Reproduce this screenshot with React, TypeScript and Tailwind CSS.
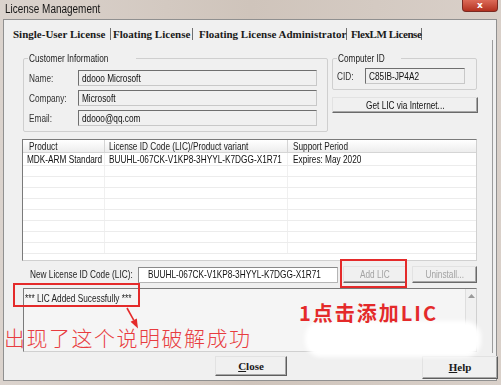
import React from "react";

const ui = { fontFamily: '"Liberation Sans", Arial, sans-serif' };
const tabFont = { fontFamily: '"Liberation Serif", "Noto Sans CJK SC", serif' };
const cjk = { fontFamily: '"Noto Sans CJK SC", "Noto Sans", sans-serif' };

function T({ children, center }: { children: React.ReactNode; center?: boolean }) {
  return (
    <span
      className={`inline-block whitespace-nowrap scale-x-[0.75] ${center ? "origin-center" : "origin-left"}`}
    >
      {children}
    </span>
  );
}

function Field({ text, w }: { text: string; w: string }) {
  return (
    <div
      className={`${w} h-[16px] shrink-0 bg-[#f0f0f0] border border-[#c8c8c8] border-t-[#6f6f6f] border-l-[#6f6f6f] flex items-center pl-[3px] text-[#111] overflow-visible`}
    >
      <T>{text}</T>
    </div>
  );
}

function Btn({
  label,
  w,
  h,
  disabled,
}: {
  label: string;
  w: string;
  h: string;
  disabled?: boolean;
}) {
  return (
    <div
      className={`${w} ${h} shrink-0 bg-[#f0f0f0] border border-[#e2e2e2] border-b-[#6a6a6a] border-r-[#6a6a6a] shadow-[inset_-1px_-1px_0_#a8a8a8] flex items-center justify-center ${
        disabled ? "text-[#a3a3a3]" : "text-[#111]"
      }`}
    >
      <T center>{label}</T>
    </div>
  );
}

const rows = Array.from({ length: 8 });

export default function App() {
  return (
    <div
      className="w-[501px] h-[385px] relative overflow-hidden flex flex-col bg-gradient-to-r from-[#dbd3cd] via-[#cfc4bb] to-[#d9d0c9]"
      style={ui}
    >
      {/* title bar */}
      <div className="h-[19px] shrink-0 flex items-start justify-between">
        <span className="ml-[5px] mt-[2px] text-[12px] leading-[14px] text-[#141414] inline-block origin-left scale-x-[0.83] whitespace-nowrap">
          License Management
        </span>
        <div className="mr-[3px] w-[36px] h-[12px] rounded-b-[4px] bg-gradient-to-b from-[#dc6a58] to-[#b3301f] border border-t-0 border-[#7a2a22] flex items-end justify-center pb-[1px]">
          <span className="text-white text-[9px] leading-[9px] font-bold" style={{ fontFamily: '"DejaVu Sans", sans-serif' }}>
            x
          </span>
        </div>
      </div>

      {/* body */}
      <div className="flex-1 ml-[3px] mr-[4px] mb-[4px] bg-[#f0f0f0] border border-[#909090] flex flex-col">
        {/* tabs */}
        <div className="h-[20px] shrink-0 flex items-end pl-[4px] text-[11px] leading-[12px] font-bold text-[#1a1a1a]" style={tabFont}>
          <div className="w-[103px] h-[12px] shrink-0 pl-[5px] border-r border-[#6f6f6f] whitespace-nowrap">Single-User License</div>
          <div className="w-[82px] h-[12px] shrink-0 pl-[2px] border-r border-[#6f6f6f] whitespace-nowrap">Floating License</div>
          <div className="w-[154px] h-[12px] shrink-0 pl-[6px] border-r border-[#6f6f6f] whitespace-nowrap">Floating License Administrator</div>
          <div className="w-[75px] h-[12px] shrink-0 pl-[4px] border-r border-[#6f6f6f] whitespace-nowrap tracking-[-0.4px]">FlexLM License</div>
        </div>

        {/* panel */}
        <div className="w-[489px] h-[313px] shrink-0 border-r border-[#9c9c9c] flex flex-col text-[11px] leading-[13px] text-[#111]">
          {/* row A */}
          <div className="mt-[12px] flex items-start">
            <fieldset className="ml-[19px] w-[305px] h-[80px] shrink-0 border border-[#cfcfcf] rounded-[2px] flex flex-col">
              <legend className="ml-[4px] px-[1px] text-[11px] leading-[12px] text-[#222]">
                <T>Customer Information</T>
              </legend>
              <div className="mt-[6px] flex flex-col gap-[4px]">
                <div className="flex items-center">
                  <span className="w-[54px] shrink-0 pl-[5px] text-[#333]"><T>Name:</T></span>
                  <Field text="ddooo Microsoft" w="w-[239px]" />
                </div>
                <div className="flex items-center">
                  <span className="w-[54px] shrink-0 pl-[5px] text-[#333]"><T>Company:</T></span>
                  <Field text="Microsoft" w="w-[239px]" />
                </div>
                <div className="flex items-center">
                  <span className="w-[54px] shrink-0 pl-[5px] text-[#333]"><T>Email:</T></span>
                  <Field text="ddooo@qq.com" w="w-[239px]" />
                </div>
              </div>
            </fieldset>
            <div className="ml-[4px] flex flex-col">
              <fieldset className="w-[145px] h-[38px] border border-[#cfcfcf] rounded-[2px] flex flex-col">
                <legend className="ml-[4px] px-[1px] text-[11px] leading-[12px] text-[#222]">
                  <T>Computer ID</T>
                </legend>
                <div className="mt-[4px] flex items-center">
                  <span className="w-[32px] shrink-0 pl-[4px] text-[#333]"><T>CID:</T></span>
                  <Field text="C85IB-JP4A2" w="w-[100px]" />
                </div>
              </fieldset>
              <div className="mt-[7px]">
                <Btn label="Get LIC via Internet..." w="w-[146px]" h="h-[16px]" />
              </div>
            </div>
          </div>

          {/* table */}
          <div className="mt-[7px] ml-[18px] w-[455px] h-[122px] bg-white border border-[#d0d0d0] border-t-[#7a7a7a] border-l-[#7a7a7a] flex flex-col overflow-hidden">
            <div className="h-[13px] shrink-0 flex bg-gradient-to-b from-[#ffffff] to-[#ededed] border-b border-[#d5d5d5] text-[#222]">
              <div className="w-[82px] shrink-0 pl-[6px] border-r border-[#d5d5d5] flex items-center"><T>Product</T></div>
              <div className="w-[183px] shrink-0 pl-[4px] border-r border-[#d5d5d5] flex items-center"><T>License ID Code (LIC)/Product variant</T></div>
              <div className="flex-1 pl-[5px] flex items-center"><T>Support Period</T></div>
            </div>
            <div className="h-[13px] shrink-0 flex border-b border-[#ececec]">
              <div className="w-[82px] shrink-0 pl-[4px] border-r border-[#f0f0f0] flex items-center"><T>MDK-ARM Standard</T></div>
              <div className="w-[183px] shrink-0 pl-[4px] border-r border-[#f0f0f0] flex items-center"><T>BUUHL-067CK-V1KP8-3HYYL-K7DGG-X1R71</T></div>
              <div className="flex-1 pl-[5px] flex items-center"><T>Expires: May 2020</T></div>
            </div>
            {rows.map((_, i) => (
              <div key={i} className="h-[11px] shrink-0 flex border-b border-[#ececec]">
                <div className="w-[82px] shrink-0 border-r border-[#f0f0f0]" />
                <div className="w-[183px] shrink-0 border-r border-[#f0f0f0]" />
                <div className="flex-1" />
              </div>
            ))}
          </div>

          {/* LIC row */}
          <div className="mt-[5px] h-[17px] flex items-center">
            <span className="ml-[26px] w-[108px] shrink-0 text-[#222]"><T>New License ID Code (LIC):</T></span>
            <div className="w-[200px] h-[16px] shrink-0 bg-white border border-[#b5b5b5] border-t-[#8a8a8a] border-l-[#8a8a8a] flex items-center pl-[9px]">
              <T>BUUHL-067CK-V1KP8-3HYYL-K7DGG-X1R71</T>
            </div>
            <div className="ml-[5px]">
              <Btn label="Add LIC" w="w-[64px]" h="h-[17px]" disabled />
            </div>
            <div className="ml-[5px]">
              <Btn label="Uninstall..." w="w-[65px]" h="h-[17px]" disabled />
            </div>
          </div>

          {/* status */}
          <div className="mt-[5px] ml-[19px] w-[454px] h-[64px] bg-[#f5f5f5] border border-[#d0d0d0] border-t-[#7a7a7a] border-l-[#7a7a7a] flex">
            <div className="flex-1 pl-[1px] pt-[3px] text-[#222]"><T>*** LIC Added Sucessfully ***</T></div>
            <div className="w-[11px] border-l border-[#dedede] bg-[#f0f0f0] flex justify-center pt-[5px]">
              <svg width="7" height="4" viewBox="0 0 7 4">
                <path d="M0 4 L3.5 0 L7 4 Z" fill="#9a9a9a" />
              </svg>
            </div>
          </div>
        </div>

        {/* bottom buttons */}
        <div className="mt-[3px] flex items-start" style={tabFont}>
          <div className="ml-[211px] w-[72px] h-[20px] shrink-0 bg-[#f0f0f0] border border-[#e2e2e2] border-b-[#5e5e5e] border-r-[#5e5e5e] shadow-[inset_-1px_-1px_0_#a8a8a8] flex items-center justify-center text-[11px] leading-[12px] font-bold text-[#1a1a1a]">
            <span><span className="underline">C</span>lose</span>
          </div>
          <div className="ml-[135px] w-[76px] h-[23px] shrink-0 bg-[#f0f0f0] border border-[#e2e2e2] border-b-[#5e5e5e] border-r-[#5e5e5e] shadow-[inset_-1px_-1px_0_#a8a8a8] flex items-end justify-center pb-[5px] text-[11px] leading-[12px] font-bold text-[#1a1a1a]">
            <span><span className="underline">H</span>elp</span>
          </div>
        </div>
      </div>

      {/* annotations overlay */}
      <div className="absolute left-[13px] top-[283px] w-[127px] h-[24px] border-2 border-[#e42a2a]" />
      <div className="absolute left-[340px] top-[259px] w-[67px] h-[29px] border-2 border-[#e42a2a]" />
      <svg className="absolute left-[120px] top-[305px]" width="25" height="28" viewBox="0 0 25 28">
        <line x1="7" y1="3" x2="13.7" y2="15.1" stroke="#e42a2a" strokeWidth="1.6" />
        <polygon points="16.8,13.4 10.6,16.8 18,23.5" fill="#e42a2a" />
      </svg>
      <div className="absolute left-[305px] top-[321px] w-[176px] h-[36px] rounded-[16px] bg-white blur-[2px]" />
      <div
        className="absolute left-[4px] top-[327px] text-[21px] leading-[21px] tracking-[1.5px] text-[#e83c40] font-light whitespace-nowrap"
        style={cjk}
      >
        出现了这个说明破解成功
      </div>
      <div
        className="absolute left-[299px] top-[302px] text-[20px] leading-[22px] tracking-[2px] text-[#e42a2a] font-bold whitespace-nowrap"
        style={cjk}
      >
        1点击添加LIC
      </div>
    </div>
  );
}
